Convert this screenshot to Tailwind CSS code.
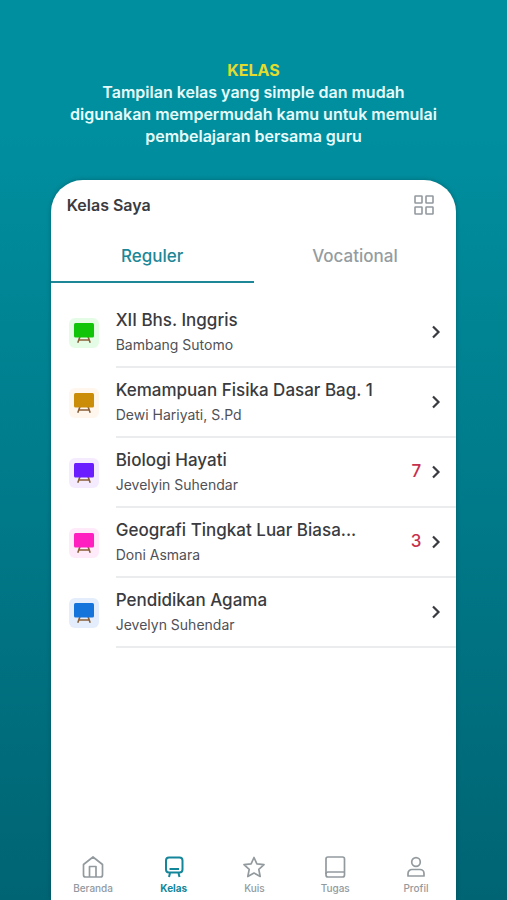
<!DOCTYPE html>
<html lang="id">
<head>
<meta charset="utf-8">
<meta name="viewport" content="width=device-width, initial-scale=1">
<title>Kelas Saya</title>
<script src="https://cdn.jsdelivr.net/npm/@tailwindcss/browser@4"></script>
</head>
<body class="min-h-screen flex flex-col bg-linear-to-b from-[#008f9f] from-15% to-[#006473] font-['Inter','Liberation_Sans',sans-serif] text-[#3a3b40]">
<svg class="hidden" aria-hidden="true">
  <symbol id="board" viewBox="0 0 22 22">
    <path d="M7 14.500 4.800 20.800M15 14.500l2.200 6.300M5.500 18h11" fill="none" stroke="#8a6038" stroke-width="1.600"/>
    <rect x="1" y="1" width="20" height="14.500" rx="1.500" fill="currentColor"/>
  </symbol>
  <symbol id="chevron" viewBox="0 0 10 14">
    <path d="M2 1.500 7.500 7 2 12.500" fill="none" stroke="currentColor" stroke-width="2.200"/>
  </symbol>
</svg>
<header class="pt-[59px] px-14 text-center text-[16px] leading-[22px] font-semibold text-[#e6fbfa]">
  <h1 class="font-bold text-[#e3dc2e]">KELAS</h1>
  <p>Tampilan kelas yang simple dan mudah<br>digunakan mempermudah kamu untuk memulai<br>pembelajaran bersama guru</p>
</header>
<main class="mt-[33px] mx-[10%] flex-1 flex flex-col bg-white rounded-t-[32px] shadow-[0_0_4px_rgba(0,50,60,0.4)]">
  <div class="flex items-center justify-between h-[50px] pl-4 pr-[22px]">
    <h2 class="text-[16px] font-semibold">Kelas Saya</h2>
    <button aria-label="Tampilan kisi" class="text-[#92999e]">
      <svg class="size-5" viewBox="0 0 20 20" fill="none" stroke="currentColor" stroke-width="1.600"><rect x="1" y="1" width="7" height="7" rx=".5"/><rect x="12" y="1" width="7" height="7" rx=".5"/><rect x="1" y="12" width="7" height="7" rx=".5"/><rect x="12" y="12" width="7" height="7" rx=".5"/></svg>
    </button>
  </div>
  <div role="tablist" class="grid grid-cols-2 text-[17px] font-medium leading-[50px]">
    <button role="tab" aria-selected="true" class="pt-px text-[#1d8797] border-b-2 border-[#1d8797]">Reguler</button>
    <button role="tab" aria-selected="false" class="pt-px text-[#949ca1] border-b-2 border-transparent">Vocational</button>
  </div>
  <ul class="pt-[15px] flex-1">
    <li><a href="#" class="flex items-center pl-[18px] gap-[17px]">
      <span class="size-[30px] rounded-md bg-[#e4fce5] text-[#10c409] flex items-center justify-center"><svg class="size-[22px]"><use href="#board"/></svg></span>
      <span class="flex-1 flex items-center h-[70px] border-b-2 border-[#ebecee] pr-[15px] gap-[10px]"><span class="flex-1 pt-[2px]"><span class="block text-[17px] leading-6 font-medium">XII Bhs. Inggris</span><span class="block text-[14px] leading-[26px] text-[#505156]">Bambang Sutomo</span></span><svg class="w-[10px] h-[14px]"><use href="#chevron"/></svg></span>
    </a></li>
    <li><a href="#" class="flex items-center pl-[18px] gap-[17px]">
      <span class="size-[30px] rounded-md bg-[#fff6ee] text-[#cb8d08] flex items-center justify-center"><svg class="size-[22px]"><use href="#board"/></svg></span>
      <span class="flex-1 flex items-center h-[70px] border-b-2 border-[#ebecee] pr-[15px] gap-[10px]"><span class="flex-1 pt-[2px]"><span class="block text-[17px] leading-6 font-medium">Kemampuan Fisika Dasar Bag. 1</span><span class="block text-[14px] leading-[26px] text-[#505156]">Dewi Hariyati, S.Pd</span></span><svg class="w-[10px] h-[14px]"><use href="#chevron"/></svg></span>
    </a></li>
    <li><a href="#" class="flex items-center pl-[18px] gap-[17px]">
      <span class="size-[30px] rounded-md bg-[#f5ebff] text-[#6a1dff] flex items-center justify-center"><svg class="size-[22px]"><use href="#board"/></svg></span>
      <span class="flex-1 flex items-center h-[70px] border-b-2 border-[#ebecee] pr-[15px] gap-[10px]"><span class="flex-1 pt-[2px]"><span class="block text-[17px] leading-6 font-medium">Biologi Hayati</span><span class="block text-[14px] leading-[26px] text-[#505156]">Jevelyin Suhendar</span></span><span class="text-[17px] font-medium text-[#c62f4d]">7</span><svg class="w-[10px] h-[14px]"><use href="#chevron"/></svg></span>
    </a></li>
    <li><a href="#" class="flex items-center pl-[18px] gap-[17px]">
      <span class="size-[30px] rounded-md bg-[#ffeaf9] text-[#ff1fc1] flex items-center justify-center"><svg class="size-[22px]"><use href="#board"/></svg></span>
      <span class="flex-1 flex items-center h-[70px] border-b-2 border-[#ebecee] pr-[15px] gap-[10px]"><span class="flex-1 pt-[2px]"><span class="block text-[17px] leading-6 font-medium">Geografi Tingkat Luar Biasa...</span><span class="block text-[14px] leading-[26px] text-[#505156]">Doni Asmara</span></span><span class="text-[17px] font-medium text-[#c62f4d]">3</span><svg class="w-[10px] h-[14px]"><use href="#chevron"/></svg></span>
    </a></li>
    <li><a href="#" class="flex items-center pl-[18px] gap-[17px]">
      <span class="size-[30px] rounded-md bg-[#e4edfc] text-[#1474dc] flex items-center justify-center"><svg class="size-[22px]"><use href="#board"/></svg></span>
      <span class="flex-1 flex items-center h-[70px] border-b-2 border-[#ebecee] pr-[15px] gap-[10px]"><span class="flex-1 pt-[2px]"><span class="block text-[17px] leading-6 font-medium">Pendidikan Agama</span><span class="block text-[14px] leading-[26px] text-[#505156]">Jevelyn Suhendar</span></span><svg class="w-[10px] h-[14px]"><use href="#chevron"/></svg></span>
    </a></li>
  </ul>
  <nav class="grid grid-cols-5 pl-[2px] pb-[5px] text-[10px] leading-[14px] font-medium text-[#939a9e]">
    <a href="#" class="flex flex-col items-center gap-[2px]"><svg class="size-6" viewBox="0 0 24 24" fill="none" stroke="currentColor" stroke-width="1.700" stroke-linejoin="round"><path d="M2.500 9.500 12 2l9.500 7.500V20a2 2 0 0 1-2 2h-15a2 2 0 0 1-2-2zM8.500 22V11.500h6.500V22"/></svg>Beranda</a>
    <a href="#" aria-current="page" class="flex flex-col items-center gap-[2px] font-bold text-[#14869a]"><svg class="size-6" viewBox="0 0 24 24" fill="none" stroke="currentColor" stroke-width="2"><rect x="4" y="2.500" width="16.500" height="15" rx="3"/><path d="M7.500 14h9.500M8 18l-1 4M16.500 18l1 4"/></svg>Kelas</a>
    <a href="#" class="flex flex-col items-center gap-[2px]"><svg class="size-6" viewBox="0 0 24 24" fill="none" stroke="currentColor" stroke-width="1.700" stroke-linejoin="round"><path d="m12 2.500 2.900 6.300 7.100.8-5.200 4.700 1.400 7.200L12 18l-6.200 3.500 1.400-7.200L2 9.600l7.100-.8z"/></svg>Kuis</a>
    <a href="#" class="flex flex-col items-center gap-[2px]"><svg class="size-6" viewBox="0 0 24 24" fill="none" stroke="currentColor" stroke-width="1.700"><rect x="3" y="2" width="18.500" height="20" rx="2"/><path d="M3 19a2 2 0 0 1 2-2h16.500"/></svg>Tugas</a>
    <a href="#" class="flex flex-col items-center gap-[2px]"><svg class="size-6" viewBox="0 0 24 24" fill="none" stroke="currentColor" stroke-width="1.700" stroke-linejoin="round"><circle cx="12" cy="7" r="4.300"/><path d="M4 21v-2.500a4 4 0 0 1 4-4h8a4 4 0 0 1 4 4V21z"/></svg>Profil</a>
  </nav>
</main>
</body>
</html>
